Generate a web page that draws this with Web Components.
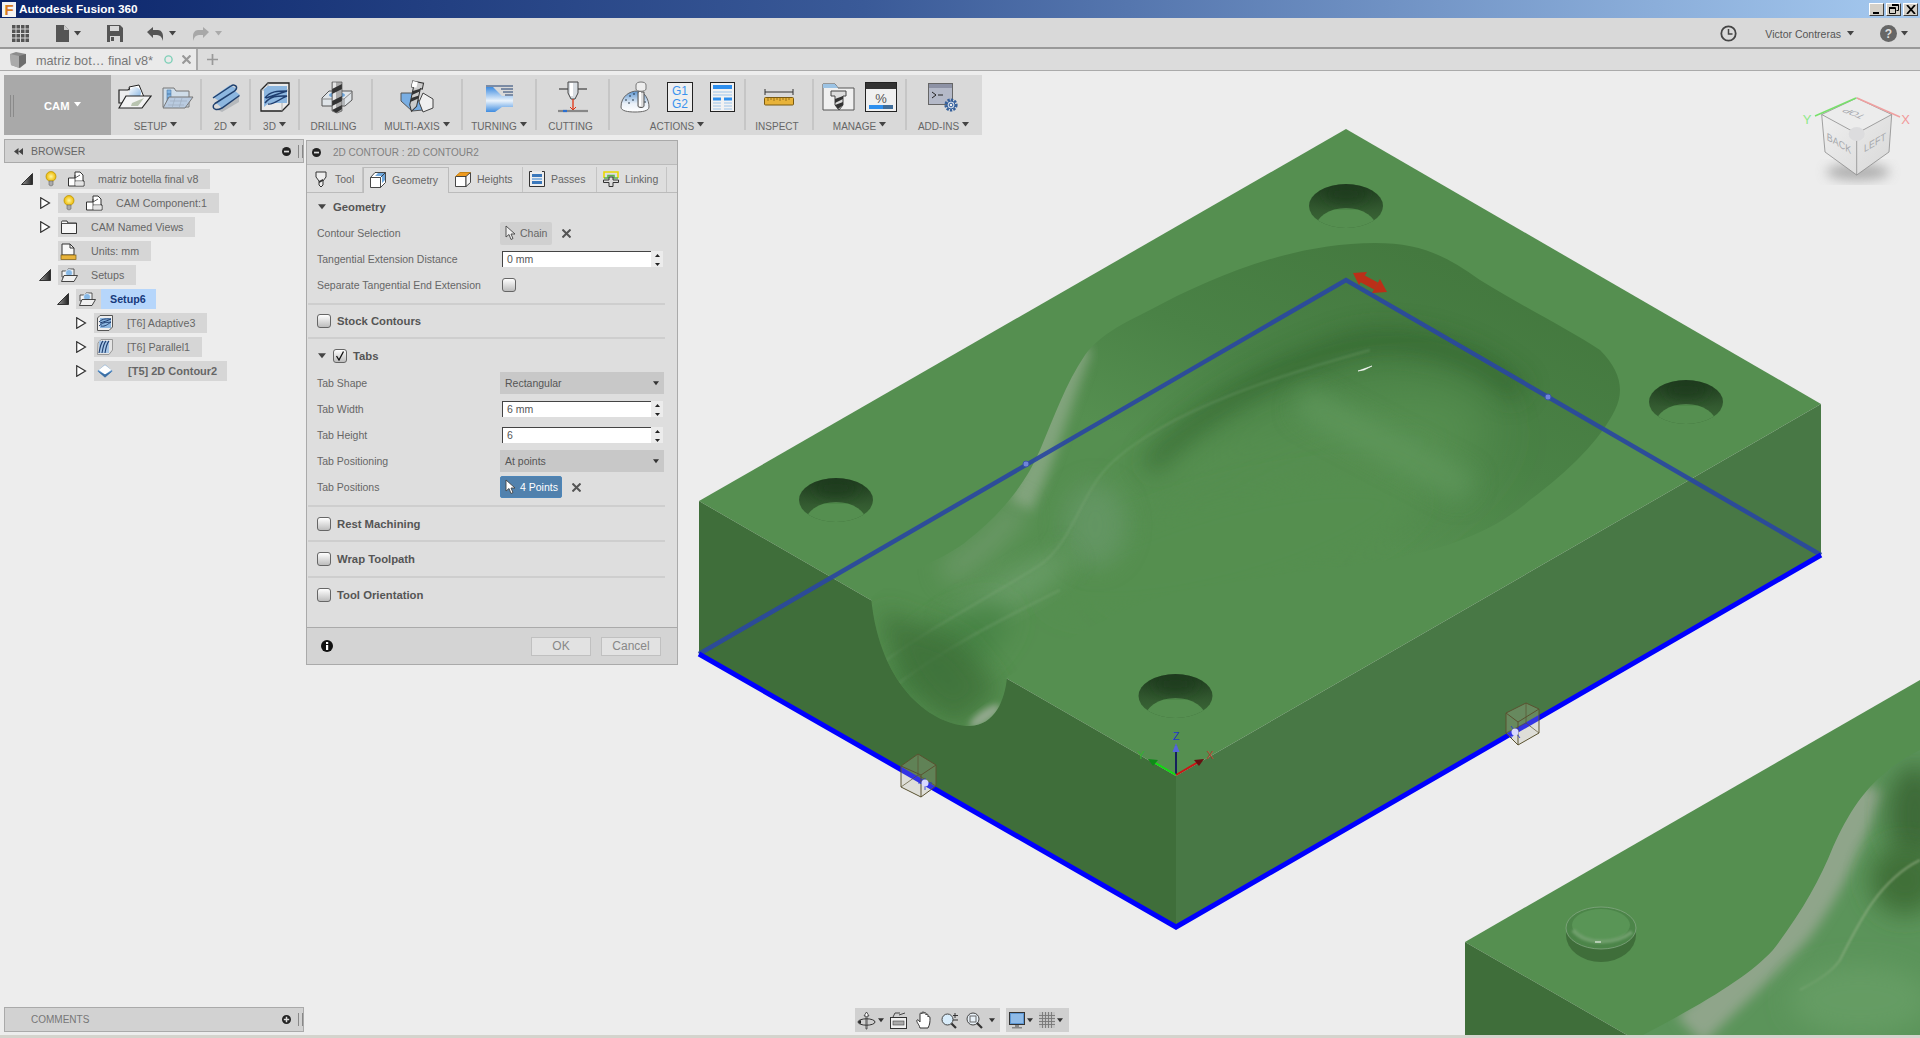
<!DOCTYPE html>
<html lang="en"><head><meta charset="utf-8"><title>Autodesk Fusion 360</title>
<style>
html,body{margin:0;height:100%;overflow:hidden;background:#ededed;font-family:"Liberation Sans",Arial,sans-serif}
fx-app{height:1038px}
</style></head><body>
<fx-app>
  <fx-title-bar></fx-title-bar>
  <fx-quick-bar></fx-quick-bar>
  <fx-doc-tabs></fx-doc-tabs>
  <fx-workspace>
    <fx-viewport slot="back"></fx-viewport>
    <fx-ribbon slot="ribbon">
      <fx-cam-button></fx-cam-button>
      <fx-rgroup w="91" label="SETUP" caret><fx-icon name="setup1"></fx-icon><fx-icon name="setup2"></fx-icon></fx-rgroup>
      <fx-rgroup w="49" label="2D" caret><fx-icon name="r2d"></fx-icon></fx-rgroup>
      <fx-rgroup w="49" label="3D" caret><fx-icon name="r3d"></fx-icon></fx-rgroup>
      <fx-rgroup w="73" label="DRILLING"><fx-icon name="drill"></fx-icon></fx-rgroup>
      <fx-rgroup w="90" label="MULTI-AXIS" caret><fx-icon name="multi"></fx-icon></fx-rgroup>
      <fx-rgroup w="74" label="TURNING" caret><fx-icon name="turn"></fx-icon></fx-rgroup>
      <fx-rgroup w="73" label="CUTTING"><fx-icon name="cut"></fx-icon></fx-rgroup>
      <fx-rgroup w="136" label="ACTIONS" caret gap="17"><fx-icon name="joy"></fx-icon><fx-icon name="g1g2"></fx-icon><fx-icon name="sheet"></fx-icon></fx-rgroup>
      <fx-rgroup w="68" label="INSPECT"><fx-icon name="ruler"></fx-icon></fx-rgroup>
      <fx-rgroup w="93" label="MANAGE" caret><fx-icon name="tlib"></fx-icon><fx-icon name="pct"></fx-icon></fx-rgroup>
      <fx-rgroup w="75" label="ADD-INS" caret last><fx-icon name="addin"></fx-icon></fx-rgroup>
    </fx-ribbon>

    <fx-browser slot="browser">
      <fx-tree-row level="0" exp="open" label="matriz botella final v8" bulb><fx-icon name="bulb"></fx-icon><fx-icon name="comp"></fx-icon></fx-tree-row>
      <fx-tree-row level="1" exp="closed" label="CAM Component:1" bulb><fx-icon name="bulb"></fx-icon><fx-icon name="comp"></fx-icon></fx-tree-row>
      <fx-tree-row level="1" exp="closed" label="CAM Named Views"><fx-icon name="folder"></fx-icon></fx-tree-row>
      <fx-tree-row level="1" label="Units: mm"><fx-icon name="units"></fx-icon></fx-tree-row>
      <fx-tree-row level="1" exp="open" label="Setups"><fx-icon name="setupS"></fx-icon></fx-tree-row>
      <fx-tree-row level="2" exp="open" label="Setup6" selected><fx-icon name="setupS"></fx-icon></fx-tree-row>
      <fx-tree-row level="3" exp="closed" label="[T6] Adaptive3"><fx-icon name="opAd"></fx-icon></fx-tree-row>
      <fx-tree-row level="3" exp="closed" label="[T6] Parallel1"><fx-icon name="opPa"></fx-icon></fx-tree-row>
      <fx-tree-row level="3" exp="closed" label="[T5] 2D Contour2" strong><fx-icon name="opCo"></fx-icon></fx-tree-row>
    </fx-browser>

    <fx-dialog slot="dialog" heading="2D CONTOUR : 2D CONTOUR2">
      <fx-tabs slot="tabs">
        <fx-tab w="56" label="Tool"><fx-icon name="tTool"></fx-icon></fx-tab>
        <fx-tab w="86" label="Geometry" active><fx-icon name="tGeo"></fx-icon></fx-tab>
        <fx-tab w="74" label="Heights"><fx-icon name="tHei"></fx-icon></fx-tab>
        <fx-tab w="74" label="Passes"><fx-icon name="tPas"></fx-icon></fx-tab>
        <fx-tab w="70" label="Linking"><fx-icon name="tLin"></fx-icon></fx-tab>
      </fx-tabs>
      <fx-section label="Geometry" tri h="26"></fx-section>
      <fx-field label="Contour Selection"><fx-picker text="Chain"></fx-picker></fx-field>
      <fx-field label="Tangential Extension Distance"><fx-input value="0 mm"></fx-input></fx-field>
      <fx-field label="Separate Tangential End Extension"><fx-check style="margin-left:2px"></fx-check></fx-field>
      <fx-rule gap="5"></fx-rule>
      <fx-section label="Stock Contours" box h="32"></fx-section>
      <fx-rule></fx-rule>
      <fx-section label="Tabs" tri box checked h="31" style="padding-top:3px"></fx-section>
      <fx-field label="Tab Shape"><fx-select text="Rectangular"></fx-select></fx-field>
      <fx-field label="Tab Width"><fx-input value="6 mm"></fx-input></fx-field>
      <fx-field label="Tab Height"><fx-input value="6"></fx-input></fx-field>
      <fx-field label="Tab Positioning"><fx-select text="At points"></fx-select></fx-field>
      <fx-field label="Tab Positions"><fx-picker text="4 Points" active></fx-picker></fx-field>
      <fx-rule gap="5"></fx-rule>
      <fx-section label="Rest Machining" box h="33"></fx-section>
      <fx-rule></fx-rule>
      <fx-section label="Wrap Toolpath" box h="34"></fx-section>
      <fx-rule></fx-rule>
      <fx-section label="Tool Orientation" box h="34"></fx-section>
    </fx-dialog>

    <fx-comments slot="comments"></fx-comments>
    <fx-nav-bar slot="nav"></fx-nav-bar>
  </fx-workspace>
</fx-app>

<script>
const TRI='<svg width="7" height="5" viewBox="0 0 7 5" style="display:block"><path d="M0 0H7L3.500 4.500Z" fill="currentColor"/></svg>';
const def=(n,c)=>customElements.define(n,c);
const SHADOW=(el,html)=>{el.attachShadow({mode:'open'}).innerHTML=html};

/* ------ icon library (each: [w,h,svg body]) ------ */
const I={
setup1:[34,24,`<defs><linearGradient id="a" x1="0" y1="0" x2="1" y2="1"><stop offset="0" stop-color="#fff"/><stop offset="1" stop-color="#7fb0e0"/></linearGradient></defs>
<path d="M1 5H10L12 3H21V18H1Z" fill="#eee" stroke="#222" stroke-width="1.200"/><path d="M11 2L21 0L26 12L15 14Z" fill="#fff" stroke="#222"/><circle cx="17" cy="8" r="6" fill="url(#a)"/>
<path d="M1 23L8 11H33L24 23Z" fill="#f4f4f4" stroke="#222" stroke-width="1.200"/><path d="M14 18L26 13L20 21H13Z" fill="#b9c4b0"/>`],
setup2:[32,24,`<path d="M1 3H12L14 6H27V22H1Z" fill="#cfdde9" stroke="#777"/><path d="M5 5h4v4h-4zM5 9h4v4h-4zM5 13h4v4h-4zM9 13h4v4h-4z" fill="#7fb2e0" stroke="#4f7cab" stroke-width=".6"/>
<path d="M1 23L7 12H31L23 23Z" fill="#b9cbe0" stroke="#777"/><path d="M8 16H25M6 20H22M13 13L10 23M20 13L17 23" stroke="#9aa9b9" stroke-width=".6" fill="none"/>`],
r2d:[31,29,`<path d="M8 27L29 12V19L12 29Z" fill="#b6b9bc"/><path d="M3 14L20 2L27 6L9 18Z" fill="#8db7e0"/><path d="M6 20L25 8L30 12L12 25Z" fill="#8db7e0"/>
<path d="M3 15L21 3C23 1.500 26 2 26.500 4C27 6 26 7 24 8.500L5 20.500C2 22.500 3 26 6 26.500C8 27 10 26 12 25L29.500 12.500" fill="none" stroke="#20406e" stroke-width="1.500"/>`],
r3d:[30,30,`<path d="M8 1H29V22L22 29H1V8Z" fill="#eaeaea" stroke="#222" stroke-width="1.300"/><path d="M8 1V8H1M22 29V8M8 8H29" stroke="#999" stroke-width=".7" fill="none"/><path d="M4 7L8 4H27V21H9L4 25Z" fill="#8db7e0"/>
<path d="M5 16C10 9 18 9 27 9C18 12 12 14 6 16M5 21C11 13 19 14 27 14C19 17 14 23 8 22" fill="none" stroke="#1f3e70" stroke-width="1.400"/>`],
drill:[34,32,`<path d="M3 17L10 10H33V19L26 25H3Z" fill="#dfe4e8" stroke="#555"/><path d="M3 18H25V25M25 18L33 11" stroke="#888" fill="none"/><ellipse cx="18" cy="14" rx="8" ry="3" fill="#6ea7dd"/>
<path d="M13 1H23V30L18 32L13 30Z" fill="#aaa"/><path d="M14 1H17V30L14 30Z" fill="#e4e4e4"/><path d="M13 8L23 3V8L13 13ZM13 20L23 15V20L13 25ZM13 29L23 24V28L17 32Z" fill="#333"/><path d="M13 1H23V30L18 32L13 30Z" fill="none" stroke="#555" stroke-width=".7"/>`],
multi:[34,34,`<path d="M1 13H15L23 30L12 31L1 21Z" fill="#79aee3" stroke="#555"/><path d="M23 13L33 19V28L23 32L19 22Z" fill="#f0f0f0" stroke="#444"/>
<g transform="rotate(12 17 10)"><path d="M11 2H22V8H20V26L16 32L13 26V8H11Z" fill="#ccc" stroke="#333"/><path d="M13 12L20 8V11L13 16ZM13 19L20 15V18L13 23Z" fill="#333"/><path d="M11 2H16V8H11Z" fill="#fff"/></g>`],
turn:[28,30,`<path d="M1 4H28M16 7H28M18 10H28M20 13H28" stroke="#1f3e70" stroke-width="1"/><defs><linearGradient id="t" x1="0" y1="0" x2="0" y2="1"><stop offset="0" stop-color="#3f8ce0"/><stop offset=".55" stop-color="#eaf3fc"/><stop offset="1" stop-color="#3f8ce0"/></linearGradient></defs>
<path d="M1 5H8L17 14H28V25H17L10 30H1Z" fill="url(#t)"/>`],
cut:[32,32,`<path d="M2 8H12M20 8H30" stroke="#222" stroke-width="1.100"/><path d="M11 1H21V12L18 18H14L11 12Z" fill="#d8dde2" stroke="#444"/><path d="M13 2H16V15H13Z" fill="#fff"/><path d="M16 18V28" stroke="#e03010" stroke-width="1.300"/><path d="M13 26L16 29L19 26" fill="none" stroke="#e03010"/>
<path d="M1 30H31" stroke="#888" stroke-width="2.200"/><path d="M6 30H10" stroke="#2a6fd0" stroke-width="2.200"/>`],
joy:[30,30,`<defs><linearGradient id="j" x1="0" y1="0" x2="0" y2="1"><stop offset="0" stop-color="#5a93cf"/><stop offset=".6" stop-color="#eaf1f8"/><stop offset="1" stop-color="#fff"/></linearGradient></defs>
<path d="M1 25C1 14 10 9 17 9C25 9 29 18 29 25C29 29 22 30 15 30C8 30 1 29 1 25Z" fill="url(#j)" stroke="#666"/><g fill="#123" ><circle cx="6" cy="18" r=".8"/><circle cx="10" cy="14" r=".8"/><circle cx="14" cy="12" r=".8"/><circle cx="9" cy="21" r=".8"/><circle cx="13" cy="18" r=".8"/><circle cx="25" cy="20" r=".8"/></g>
<path d="M18 10H24V24C24 26 18 26 18 24Z" fill="#ddd" stroke="#555"/><path d="M19 10H21V24H19Z" fill="#fff"/><path d="M16 3C16 1 18 0 21 0C24 0 26 1 26 3V7C26 10 16 10 16 7Z" fill="#eee" stroke="#777"/>`],
g1g2:[26,30,`<rect x=".5" y=".5" width="25" height="29" fill="#efefef" stroke="#222"/><text x="13" y="13" font-size="12" text-anchor="middle" fill="#3b93ee">G1</text><text x="13" y="26" font-size="12" text-anchor="middle" fill="#3b93ee">G2</text>`],
sheet:[25,30,`<rect x=".5" y=".5" width="24" height="29" fill="#f2f2f2" stroke="#222"/><rect x="3" y="3" width="19" height="4" fill="#2e8fee"/><path d="M3 10H22M3 13H22" stroke="#9cc4ea"/><path d="M3 15.500h8v3h-8zM14 15.500h8v3h-8z" fill="#2e8fee"/><path d="M3 21H11M14 21H22M3 24H11M14 24H22M3 27H11M14 27H22" stroke="#9cc4ea"/>`],
ruler:[30,18,`<path d="M1 1V7M29 1V7M1 4H29" stroke="#333" fill="none"/><rect x=".5" y="9.500" width="29" height="7.500" rx="1" fill="#e8b33a" stroke="#7a5a10"/><path d="M4 10V13M7 10V12M10 10V13M13 10V12M16 10V13M19 10V12M22 10V13M25 10V12" stroke="#7a5a10" stroke-width=".7"/>`],
tlib:[33,28,`<path d="M1 1H13L16 5H32V27H1Z" fill="#f0f0f0" stroke="#555"/><path d="M1 1H13L16 5H1Z" fill="#9cc3e4"/><path d="M9 8H24V13H21V22L17 27L13 22V13H9Z" fill="#ddd" stroke="#444"/><path d="M13 16L21 13V16L13 20ZM13 22L21 19V22L16 26Z" fill="#333"/>`],
pct:[32,30,`<rect x=".5" y=".5" width="31" height="29" fill="#f0f0f0" stroke="#222"/><rect x="1" y="1" width="30" height="6" fill="#333"/><text x="16" y="21" font-size="13" text-anchor="middle" fill="#555">%</text><rect x="4" y="23" width="14" height="4" fill="#2e8fee"/><rect x="18" y="23" width="10" height="4" fill="#3f6d9a"/>`],
addin:[31,29,`<rect x=".5" y=".5" width="24" height="21" fill="#b4b9c8" stroke="#666"/><rect x="1" y="1" width="23" height="4" fill="#8d92a5"/><path d="M4 9L8 12L4 15M10 12H15" stroke="#222" fill="none"/>
<g transform="translate(23 22)"><circle r="5.200" fill="none" stroke="#35609c" stroke-width="2.800" stroke-dasharray="2.200 1.200"/><circle r="4" fill="#cdd8e8" stroke="#35609c"/><circle r="1.800" fill="#f0f0f0" stroke="#35609c"/></g>`],
bulb:[12,16,`<defs><radialGradient id="b"><stop offset="0" stop-color="#fff7a0"/><stop offset="1" stop-color="#eeb800"/></radialGradient></defs><circle cx="6" cy="5.500" r="5" fill="url(#b)" stroke="#b59000" stroke-width=".7"/><path d="M4 10H8V14L6 15L4 14Z" fill="#aaa" stroke="#666" stroke-width=".6"/>`],
comp:[17,16,`<path d="M.5 7H7V1H12L15 4V10H16V15H.5Z" fill="#fff" stroke="#333"/><path d="M7 4V15M7 10H16M7 7L12 4" stroke="#333" fill="none" stroke-width=".8"/><path d="M7.500 10.500h8v4h-8z" fill="#e4e4e4"/>`],
folder:[16,14,`<path d="M.5 2.500C.5 1 1 1 2 1H6L7 3H15.500V13.500H.5Z" fill="#f6f6f6" stroke="#333"/><path d="M.5 3.500H15" stroke="#555"/>`],
units:[16,17,`<path d="M1 1H9L13 5V12H1Z" fill="#f8f8f8" stroke="#333"/><path d="M9 1V5H13" fill="none" stroke="#333"/><rect x="0" y="12" width="15" height="4.500" fill="#e8b33a" stroke="#7a5a10" stroke-width=".7"/>`],
setupS:[17,14,`<path d="M1 3H6L7 1H13V9H1Z" fill="#f4f4f4" stroke="#333" stroke-width=".8"/><circle cx="8" cy="5" r="3.500" fill="#86b8e6" stroke="#fff" stroke-width=".6"/><path d="M.5 13.500L3 7.500H16.500L13 13.500Z" fill="#f0f0f0" stroke="#333" stroke-width=".9"/>`],
opAd:[16,16,`<path d="M3 .5H15.500V12L12 15.500H.5V3Z" fill="#eee" stroke="#555"/><rect x="3" y="3" width="11" height="10" fill="#8db7e0"/><path d="M2 7C6 3 10 4 14 4C10 6 6 7 3 8M2 11C7 6 10 8 14 7C11 9 8 12 4 11" fill="none" stroke="#1f3e70"/>`],
opPa:[16,16,`<path d="M4 .5H15.500V11L12 15.500H.5L1 4Z" fill="#e5e5e5" stroke="#999"/><rect x="2" y="2" width="10" height="12" fill="#a7c6e6"/><path d="M2 14C3 8 4 4 6 2M5 14C6 8 7 4 9 2M8 14C9 8 10 4 12 2" fill="none" stroke="#1f3e70" stroke-width="1.100"/>`],
opCo:[16,14,`<path d="M.5 7L8 .5L15.500 7L8 13.500Z" fill="#5a94cc"/><path d="M1.500 6L8 1L14.500 6L8 10.500Z" fill="#fff"/><path d="M.5 7L8 13.500L15.500 7L8 10.500Z" fill="#3c6ea3"/>`],
tTool:[12,17,`<path d="M1 1H11V6L8 10V14L6 16L4 14V10L1 6Z" fill="#eee" stroke="#333"/><path d="M4 10L8 8V10L4 12Z" fill="#333"/>`],
tGeo:[16,16,`<path d="M.5 5.500L5 .5H15.500V10.500L10.500 15.500H.5Z" fill="#fff" stroke="#333" stroke-width=".9"/><path d="M5 4L8 1H15V8L12 11V4Z" fill="#6da6dc"/><path d="M.5 5.500H10.500V15.500M10.500 5.500L15.500 .5" fill="none" stroke="#333" stroke-width=".9"/>`],
tHei:[16,16,`<path d="M.5 5.500L5 1.500H15.500L11 5.500Z" fill="#ee9a20"/><path d="M.5 5.500H11V15.500H.5Z" fill="#fff" stroke="#333" stroke-width=".9"/><path d="M11 5.500L15.500 1.500V11.500L11 15.500Z" fill="#f5f5f5" stroke="#333" stroke-width=".9"/><path d="M.5 5.500L5 1.500H15.500" fill="none" stroke="#c78314"/>`],
tPas:[16,16,`<path d="M.5 .5V15.500H15.500V.5" fill="#eee" stroke="#333"/><rect x="3" y="3" width="10" height="3" fill="#3b78bb"/><rect x="3" y="7" width="10" height="2" fill="#8eb7e0"/><rect x="3" y="10" width="10" height="3" fill="#3b78bb"/><path d="M.5 .5H3M13 .5H15.500" stroke="#333"/>`],
tLin:[16,16,`<path d="M1 7V1H15V7" fill="none" stroke="#e8d800" stroke-width="1.600"/><path d="M1 7H5V4.500H11V7H15" stroke="#5ab44a" stroke-width="1.600" fill="none"/><path d="M.5 9H6V6H10V9H15.500V11.500H10V15.500H6V11.500H.5Z" fill="#ddd" stroke="#333"/>`],
cursor:[11,16,`<path d="M1 1V12L4 9.500L6 14.500L8 13.500L6 9H10Z" fill="currentColor" stroke="#444" stroke-width=".9"/>`]
};
let iconSeq=0;
def('fx-icon',class extends HTMLElement{connectedCallback(){
  if(this.shadowRoot)return;
  const d=I[this.getAttribute('name')];
  const uid='i'+(++iconSeq);
  const body=d[2].replace(/id="(\w+)"/g,`id="${uid}$1"`).replace(/url\(#(\w+)\)/g,`url(#${uid}$1)`);
  SHADOW(this,`<style>:host{display:inline-block;line-height:0;flex:none;font-family:"Liberation Sans",sans-serif}svg{display:block;overflow:visible}</style>
  <svg width="${d[0]}" height="${d[1]}" viewBox="0 0 ${d[0]} ${d[1]}">${body}</svg>`);
}});

def('fx-app',class extends HTMLElement{constructor(){super();SHADOW(this,`<style>:host{display:flex;flex-direction:column;width:1920px;height:1038px;overflow:hidden;border-bottom:3px solid #d4d4cd;box-sizing:border-box}</style><slot></slot>`)}});

def('fx-title-bar',class extends HTMLElement{constructor(){super();SHADOW(this,`<style>
:host{display:flex;align-items:center;height:18px;flex:none;background:linear-gradient(90deg,#0a246a,#3a5a98 45%,#a6caf0);color:#fff;font:bold 11.800px "Liberation Sans",sans-serif;position:relative;z-index:2}
.logo{width:14px;height:15px;margin:0 3px 0 2px;background:#f4f4f4;color:#d97b20;font:bold 15px/15px "Liberation Sans",sans-serif;text-align:center}
.sp{flex:1}.w{display:flex;gap:2px;margin-right:2px}
.b{width:15px;height:13px;box-sizing:border-box;background:#d4d0c8;border:1px solid;border-color:#fff #404040 #404040 #fff;display:flex;align-items:center;justify-content:center}
</style><div class="logo">F</div><span>Autodesk Fusion 360</span><div class="sp"></div>
<div class="w"><div class="b"><svg width="9" height="9"><path d="M1 7H7V9H1Z" fill="#000"/></svg></div>
<div class="b"><svg width="10" height="10"><path d="M3.500 .5H9.500V6.500H7.500M.5 3.500H6.500V9.500H.5Z" fill="none" stroke="#000"/><path d="M3 1H9M0 4H6" stroke="#000" stroke-width="2"/></svg></div>
<div class="b"><svg width="10" height="9"><path d="M1 0L9 9M9 0L1 9" stroke="#000" stroke-width="1.800"/></svg></div></div>`)}});

def('fx-quick-bar',class extends HTMLElement{constructor(){super();
const grid=[0,4.500,9,13.500].flatMap(x=>[0,4.500,9,13.500].map(y=>`<rect x="${x}" y="${y}" width="3.500" height="3.500"/>`)).join('');
SHADOW(this,`<style>
:host{display:flex;align-items:center;flex:none;background:#d9d9d9;border-bottom:2px solid #999;color:#555;font:10.500px "Liberation Sans",sans-serif;padding:2px 0 0 12px;box-sizing:content-box;height:27px;position:relative;z-index:2}
svg{display:block;flex:none}.c{margin-left:4px;color:#444}.sp{flex:1}.g{color:#aaa}
</style>
<svg width="17" height="17" fill="#555">${grid}</svg>
<svg style="margin-left:27px" width="13" height="17"><path d="M0 0H8L13 5V17H0Z" fill="#555"/><path d="M8 0V5H13" fill="#ccc"/></svg><span class="c" style="margin-left:5px">${TRI}</span>
<svg style="margin-left:26px" width="16" height="17"><path d="M0 0H13L16 3V17H0Z" fill="#555"/><rect x="3" y="1" width="9" height="5" fill="#d9d9d9"/><rect x="3" y="11" width="10" height="6" fill="#d9d9d9"/><rect x="4" y="12" width="3" height="4" fill="#555"/></svg>
<svg style="margin-left:24px" width="16" height="14"><path d="M0 5L6 0V3H11C14 3 16 6 16 9V14C15 10 13 8 10 8H6V11Z" fill="#555"/></svg><span class="c" style="margin-left:6px">${TRI}</span>
<svg style="margin-left:17px" width="16" height="14"><path d="M16 5L10 0V3H5C2 3 0 6 0 9V14C1 10 3 8 6 8H10V11Z" fill="#a8a8a8"/></svg><span class="c g" style="margin-left:6px">${TRI}</span>
<div class="sp"></div>
<svg width="17" height="17"><circle cx="8.500" cy="8.500" r="7.200" fill="none" stroke="#444" stroke-width="1.800"/><path d="M8.500 4V9H12.500" fill="none" stroke="#444" stroke-width="1.500"/></svg>
<span style="margin-left:28px">Victor Contreras</span><span class="c" style="margin-left:6px">${TRI}</span>
<svg style="margin-left:26px" width="17" height="17"><circle cx="8.500" cy="8.500" r="8.500" fill="#666"/><text x="8.500" y="13" text-anchor="middle" font-size="12" font-weight="bold" fill="#ddd" font-family="Liberation Sans">?</text></svg><span class="c" style="margin-left:4px;margin-right:12px">${TRI}</span>`)}});

def('fx-doc-tabs',class extends HTMLElement{constructor(){super();SHADOW(this,`<style>
:host{display:flex;align-items:center;height:21px;flex:none;background:#dcdcdc;border-bottom:1px solid #aaa;font:12.700px "Liberation Sans",sans-serif;color:#777;position:relative;z-index:2}
.tab{display:flex;align-items:center;width:198px;height:100%;box-sizing:border-box;background:#eaeaea;border-right:2px solid #aaa;padding-left:10px}
.t{margin-left:10px;white-space:nowrap;padding-top:2px}
</style><div class="tab"><svg width="16" height="16"><path d="M0 2L6 0L16 2V11L10 16L1 13Z" fill="#8c8c8c"/><path d="M0 2L9 4V16L1 13Z" fill="#aaa"/><path d="M9 4L16 2V11L9 16Z" fill="#6e6e6e"/></svg>
<span class="t">matriz bot… final v8*</span>
<svg style="margin-left:11px;flex:none" width="9" height="9"><circle cx="4.500" cy="4.500" r="3.600" fill="none" stroke="#7fd0b8" stroke-width="1.400"/></svg>
<svg style="margin-left:9px;flex:none" width="9" height="9"><path d="M.5 .5L8.500 8.500M8.500 .5L.5 8.500" stroke="#999" stroke-width="2.200"/></svg></div>
<svg style="margin-left:9px" width="11" height="11"><path d="M5.500 0V11M0 5.500H11" stroke="#999" stroke-width="1.700"/></svg>`)}});

def('fx-workspace',class extends HTMLElement{constructor(){super();SHADOW(this,`<style>
:host{display:grid;position:relative;flex:1;min-height:0;background:#ededed;grid-template-columns:auto 1fr;grid-template-rows:auto 1fr auto}
::slotted([slot=ribbon]){grid-column:1/3;margin:4px 0 0 4px;position:relative}
.main{grid-column:1/3;display:flex;align-items:flex-start;margin-top:4px;padding-left:4px;min-height:0;position:relative}
.foot{grid-column:1/3;display:grid;grid-template-columns:1fr auto 1fr;align-items:start;padding:0 0 3px 4px;position:relative}
</style><slot name="back"></slot><slot name="ribbon"></slot>
<div class="main"><slot name="browser"></slot><slot name="dialog"></slot></div>
<div class="foot"><slot name="comments"></slot><slot name="nav"></slot></div>`)}});

def('fx-ribbon',class extends HTMLElement{constructor(){super();SHADOW(this,`<style>:host{display:flex;width:fit-content;height:60px;background:#d9d9d9}</style><slot></slot>`)}});
def('fx-cam-button',class extends HTMLElement{constructor(){super();SHADOW(this,`<style>
:host{display:flex;align-items:center;width:107px;box-sizing:border-box;background:#a9a9a9;color:#fff;font:bold 11.200px "Liberation Sans",sans-serif;padding:2px 0 0 6px}
.g{width:4px;height:22px;border:solid #8a8a8a;border-width:0 1px;box-sizing:border-box;margin-right:30px}
.c{margin-left:5px;margin-top:-3px}</style><div class="g"></div><span>CAM</span><span class="c">${TRI}</span>`)}});
def('fx-rgroup',class extends HTMLElement{constructor(){super();
const hasCaret=this.hasAttribute('caret');
const caret=hasCaret?`<span class="c">${TRI}</span>`:'';
SHADOW(this,`<style>
:host{display:flex;flex-direction:column;position:relative;box-sizing:border-box;color:#666;font:10px "Liberation Sans",sans-serif;align-items:center}
:host(:not([last]))::after{content:"";position:absolute;right:0;top:4px;bottom:5px;width:2px;background:#c6c6c6}
.i{flex:1;display:flex;align-items:center;justify-content:center;gap:${this.getAttribute('gap')||10}px;padding-top:2px;padding-right:2px}
.l{display:flex;align-items:center;height:18px;padding-right:${hasCaret?2:6}px;white-space:nowrap}.c{margin-left:3px;color:#444;margin-top:-3px}
</style><div class="i"><slot></slot></div><div class="l">${this.getAttribute('label')}${caret}</div>`);
this.style.width=this.getAttribute('w')+'px';}});

def('fx-browser',class extends HTMLElement{constructor(){super();SHADOW(this,`<style>
:host{display:block;width:300px;flex:none;color:#666;font:10.500px "Liberation Sans",sans-serif}
.h{display:flex;align-items:center;height:24px;box-sizing:border-box;background:#d2d2d2;border:1px solid #aaa;padding-left:9px;margin-bottom:6px;color:#666}
.h span{margin-left:8px;flex:1}.g{width:3px;height:13px;border:solid #888;border-width:0 1px;margin:0 0 0 7px}
</style><div class="h"><svg width="9" height="7"><path d="M4.500 0V7L0 3.500ZM9 0V7L4.500 3.500Z" fill="#444"/></svg><span>BROWSER</span>
<svg width="9" height="9"><circle cx="4.500" cy="4.500" r="4.500" fill="#222"/><rect x="2" y="3.700" width="5" height="1.700" fill="#ddd"/></svg><div class="g"></div></div><slot></slot>`)}});

def('fx-tree-row',class extends HTMLElement{constructor(){super();
const lv=+this.getAttribute('level'),exp=this.getAttribute('exp');
const e=exp==='open'?`<svg width="12" height="12"><defs><linearGradient id="g" x1="0" x2="1"><stop offset="0" stop-color="#999"/><stop offset="1" stop-color="#222"/></linearGradient></defs><path d="M.5 11.500L11.500 .5V11.500Z" fill="url(#g)" stroke="#333"/></svg>`
 :exp==='closed'?`<svg width="11" height="12" style="margin-left:1px"><path d="M.7 .7L9.500 6L.7 11.300Z" fill="#fff" stroke="#333" stroke-width="1.200"/></svg>`:'';
const bulb=this.hasAttribute('bulb');
SHADOW(this,`<style>
:host{display:flex;align-items:center;height:20px;margin-bottom:4px;padding-left:${17+18*lv}px;color:#666;font:10.700px "Liberation Sans",sans-serif;white-space:nowrap}
.e{width:19px;flex:none;display:flex;align-items:center}
.b{display:flex;align-items:center;height:20px;background:#d6d6d6}
.ic{display:flex;align-items:center;justify-content:space-between;box-sizing:border-box;width:${bulb?50:25}px;padding:0 ${bulb?5:4}px 0 ${bulb?5:3}px}
.l{padding:0 12px 0 8px;height:20px;line-height:20px}
:host([selected]) .l{background:#b6d6fb;color:#16397c;font-weight:bold;padding:0 10px 0 9px}
:host([strong]) .l{font-weight:bold;font-size:11px;padding:0 10px 0 9px}
</style><div class="e">${e}</div><div class="b"><div class="ic"><slot></slot></div><div class="l">${this.getAttribute('label')}</div></div>`)}});

def('fx-dialog',class extends HTMLElement{constructor(){super();SHADOW(this,`<style>
:host{display:flex;flex-direction:column;width:372px;height:525px;margin:1px 0 0 2px;box-sizing:border-box;background:#dedede;border:1px solid #aaa;color:#666;font:10.500px "Liberation Sans",sans-serif;flex:none}
.h{display:flex;align-items:center;height:23px;flex:none;background:#d2d2d2;border-bottom:1px solid #bbb;padding-left:5px;color:#808080;font-size:10px}
.h span{margin-left:12px}
.body{flex:1;min-height:0;display:flex;flex-direction:column;padding-top:1px}
.f{display:flex;align-items:center;height:37px;flex:none;box-sizing:border-box;background:#d4d4d4;border-top:1px solid #aaa;padding-left:14px}
.btn{width:60px;height:19px;box-sizing:border-box;background:#e2e2e2;border:1px solid #c0c0c0;display:flex;align-items:center;justify-content:center;font-size:12px;color:#888}
</style><div class="h"><svg width="9" height="9"><circle cx="4.500" cy="4.500" r="4.500" fill="#222"/><rect x="2" y="3.700" width="5" height="1.700" fill="#ddd"/></svg><span>${this.getAttribute('heading')}</span></div>
<slot name="tabs"></slot><div class="body"><slot></slot></div>
<div class="f"><svg width="12" height="12"><circle cx="6" cy="6" r="6" fill="#111"/><rect x="5" y="5" width="2.200" height="5" fill="#fff"/><rect x="5" y="2" width="2.200" height="2" fill="#fff"/></svg>
<div class="btn" style="margin-left:198px">OK</div><div class="btn" style="margin-left:10px">Cancel</div></div>`)}});
def('fx-tabs',class extends HTMLElement{constructor(){super();SHADOW(this,`<style>:host{display:flex;height:28px;flex:none;padding-top:2px;box-sizing:border-box;border-bottom:1px solid #bbb}</style><slot></slot>`)}});
def('fx-tab',class extends HTMLElement{constructor(){super();SHADOW(this,`<style>
:host{display:flex;align-items:center;box-sizing:border-box;height:25px;padding:0 0 1px 6px;gap:6px;border-right:1px solid #c4c4c4;color:#666;font:10.500px "Liberation Sans",sans-serif}
:host([active]){height:26px;background:#dedede;border:1px solid #bbb;border-bottom:none;padding:0 0 2px 6px;position:relative}
.s{width:16px;display:flex;justify-content:center}
</style><div class="s"><slot></slot></div><span>${this.getAttribute('label')}</span>`);this.style.width=this.getAttribute('w')+'px';}});

def('fx-check',class extends HTMLElement{constructor(){super();SHADOW(this,`<style>
:host{display:block;width:14px;height:14px;box-sizing:border-box;flex:none;border:1px solid #666;border-radius:3px;background:linear-gradient(#fff,#bdbdbd)}
svg{display:block;margin:1px}</style>${this.hasAttribute('checked')?'<svg width="10" height="10"><path d="M1.500 5L4 9L8.500 .5" fill="none" stroke="#111" stroke-width="1.300"/></svg>':''}`)}});

def('fx-section',class extends HTMLElement{constructor(){super();
const tri=this.hasAttribute('tri'),box=this.hasAttribute('box');
SHADOW(this,`<style>
:host{display:flex;align-items:center;flex:none;height:${this.getAttribute('h')}px;box-sizing:border-box;padding-left:${tri?11:10}px;font:bold 11.300px "Liberation Sans",sans-serif;color:#555}
.t{color:#444;margin-right:7px}.b{margin-right:6px}
</style>${tri?`<span class="t">${TRI.replace('width="7" height="5"','width="8" height="6"')}</span>`:''}${box?`<fx-check class="b" ${this.hasAttribute('checked')?'checked':''}></fx-check>`:''}<span>${this.getAttribute('label')}</span>`);}});

def('fx-field',class extends HTMLElement{constructor(){super();SHADOW(this,`<style>
:host{display:flex;align-items:center;flex:none;height:26px;padding-left:10px;color:#666;font:10.500px "Liberation Sans",sans-serif;white-space:nowrap}
.l{width:183px;flex:none}.c{display:flex;align-items:center}
</style><div class="l">${this.getAttribute('label')}</div><div class="c"><slot></slot></div>`)}});
def('fx-rule',class extends HTMLElement{constructor(){super();SHADOW(this,`<style>:host{display:block;height:2px;flex:none;background:#cecece;margin:${this.getAttribute('gap')||0}px 12px 0 1px}</style>`)}});

def('fx-input',class extends HTMLElement{constructor(){super();SHADOW(this,`<style>
:host{display:flex;height:16px;margin-left:2px;font:10.500px "Liberation Sans",sans-serif;color:#555}
.i{width:149px;box-sizing:border-box;background:#fff;border-top:1px solid #444;border-left:1px solid #444;padding-left:4px;line-height:14px}
.s{width:12px;display:flex;flex-direction:column;align-items:center;justify-content:space-between;background:#ececec;color:#222;padding:3px 0 1px;box-sizing:border-box}
.s svg{display:block;width:5px;height:3px}
</style><div class="i">${this.getAttribute('value')}</div><div class="s"><svg viewBox="0 0 5 3"><path d="M0 3H5L2.500 0Z" fill="currentColor"/></svg><svg viewBox="0 0 5 3"><path d="M0 0H5L2.500 3Z" fill="currentColor"/></svg></div>`)}});
def('fx-select',class extends HTMLElement{constructor(){super();SHADOW(this,`<style>
:host{display:flex;align-items:center;justify-content:space-between;width:164px;height:22px;box-sizing:border-box;background:#c8c8c8;padding:0 5px;color:#555;font:10.500px "Liberation Sans",sans-serif}
</style><span>${this.getAttribute('text')}</span><span style="color:#333">${TRI.replace('width="7"','width="6"')}</span>`)}});
def('fx-picker',class extends HTMLElement{constructor(){super();SHADOW(this,`<style>
:host{display:flex;align-items:center;gap:0;color:#666;font:10.500px "Liberation Sans",sans-serif}
.p{display:flex;align-items:center;height:23px;box-sizing:border-box;padding:0 5px 0 5px;background:#d0d0d0;gap:4px;border-radius:2px;color:#eee}
.p span{color:#666}
:host([active]) .p{background:#5181ad;border:1px solid #4c85b8;color:#fff;padding:0 3px 0 4px;height:22px}
:host([active]) .p span{color:#fff}
.x{margin-left:10px}
</style><div class="p"><fx-icon name="cursor"></fx-icon><span>${this.getAttribute('text')}</span></div>
<svg class="x" width="9" height="9"><path d="M.5 .5L8.500 8.500M8.500 .5L.5 8.500" stroke="#555" stroke-width="2"/></svg>`)}});

def('fx-comments',class extends HTMLElement{constructor(){super();SHADOW(this,`<style>
:host{display:flex;align-items:center;width:300px;height:25px;box-sizing:border-box;background:#d2d2d2;border:1px solid #aaa;padding-left:26px;color:#777;font:10px "Liberation Sans",sans-serif}
span{flex:1}.g{width:3px;height:13px;border:solid #888;border-width:0 1px;margin:0 0 0 7px}
</style><span>COMMENTS</span><svg width="9" height="9"><circle cx="4.500" cy="4.500" r="4.500" fill="#222"/><path d="M4.500 1.800V7.200M1.800 4.500H7.200" stroke="#ddd" stroke-width="1.500"/></svg><div class="g"></div>`)}});

def('fx-nav-bar',class extends HTMLElement{constructor(){super();
const tr=TRI.replace('width="7"','width="6"');
SHADOW(this,`<style>
:host{display:flex;gap:6px;margin-top:1px}
.g{display:flex;align-items:center;height:24px;background:#d0d0d0;color:#333;box-sizing:border-box}
svg{display:block;flex:none}.c{margin:0 0 0 2px}
</style><div class="g" style="width:145px;padding-left:2px">
<svg width="19" height="19" viewBox="0 0 19 19"><path d="M9.500 1L7 5H9V18H10V5H12Z" fill="#fff" stroke="#333" stroke-width=".8"/><ellipse cx="9.500" cy="11" rx="8.500" ry="3.200" fill="none" stroke="#333"/><path d="M1 11L4 9V13Z" fill="#222"/></svg><span class="c">${tr}</span>
<svg width="17" height="17" viewBox="0 0 17 17" style="margin-left:5.500px"><rect x=".5" y="5.500" width="16" height="11" fill="#f0f0f0" stroke="#333"/><rect x="3" y="9" width="11" height="4" fill="#aaa" stroke="#444" stroke-width=".6"/><path d="M3 5L5 1H10M9 3L15 1" stroke="#444" fill="none"/></svg>
<svg width="17" height="18" viewBox="0 0 17 18" style="margin-left:9px"><path d="M4 17C3 13 0 11 1 9C2 8 3 10 4 11V3C4 1.500 6 1.500 6 3V2C6 .5 8 .5 8 2V2.500C8 1 10 1 10 3V4C10 2.500 12 3 12 4V6C12.500 5 14 5 14 7C14 11 14 13 12 17Z" fill="#fff" stroke="#333"/></svg>
<svg width="18" height="17" viewBox="0 0 18 17" style="margin-left:8.500px"><circle cx="6.500" cy="7.500" r="5.500" fill="#d8ecfa" stroke="#444"/><path d="M10.500 11.500L15 16" stroke="#333" stroke-width="2.200"/><path d="M14 1V6M12 3.500H17M12 8H17" stroke="#333" fill="none"/></svg>
<svg width="17" height="17" viewBox="0 0 17 17" style="margin-left:6.500px"><circle cx="7" cy="7" r="6" fill="#e8f1f8" stroke="#444"/><rect x="4" y="4" width="6" height="6" fill="none" stroke="#666"/><path d="M11 11L16 16" stroke="#333" stroke-width="2.200"/></svg><span style="margin-left:6.500px">${tr}</span></div>
<div class="g" style="width:63px;padding-left:3px">
<svg width="16" height="17" viewBox="0 0 16 17"><rect x=".5" y=".5" width="15" height="12" fill="#5d96d2" stroke="#333"/><rect x="2" y="2" width="12" height="9" fill="#8fbbe8"/><path d="M6 13H10V15H13V16.500H3V15H6Z" fill="#888"/></svg><span class="c">${tr}</span>
<svg width="16" height="16" viewBox="0 0 16 16" style="margin-left:6px"><rect width="16" height="16" fill="#c4c4c4"/><path d="M3.500 0V16M6.500 0V16M9.500 0V16M12.500 0V16M0 3.500H16M0 6.500H16M0 9.500H16M0 12.500H16" stroke="#777" stroke-width=".9"/></svg><span class="c">${tr}</span></div>`)}});

/* ------ free canvas: 3-D model viewport ------ */
const hole=(cx,cy,id)=>`<clipPath id="h${id}"><ellipse cx="${cx}" cy="${cy}" rx="37" ry="22"/></clipPath>
<ellipse cx="${cx}" cy="${cy}" rx="37" ry="22" fill="url(#holeG)"/>
<g clip-path="url(#h${id})"><ellipse cx="${cx}" cy="${cy+23}" rx="31" ry="21" fill="#558f50"/><ellipse cx="${cx}" cy="${cy-12}" rx="22" ry="10" fill="#1f3a1e" filter="url(#b6)" opacity=".7"/></g>`;
const pocket="M871 597C905 570 945 560 968 540C1000 515 1025 485 1040 450C1055 415 1065 385 1085 355C1100 335 1120 325 1150 310C1210 278 1290 243 1375 243C1420 243 1445 255 1480 280C1520 305 1570 330 1600 350C1620 370 1625 390 1615 410C1600 440 1570 470 1530 500C1490 535 1440 550 1380 562C1310 572 1240 580 1180 592C1130 605 1090 625 1007 677C1005 700 995 725 970 726C935 726 880 690 871 597Z";
def('fx-viewport',class extends HTMLElement{constructor(){super();SHADOW(this,`<style>
:host{position:absolute;inset:0;display:block;font-family:"Liberation Sans",sans-serif}
svg{position:absolute;left:0;top:0;display:block}
</style>
<svg width="1920" height="964" viewBox="0 71 1920 964">
<defs>
<linearGradient id="holeG" x1="0" y1="0" x2="0" y2="1"><stop offset="0" stop-color="#1e3a1e"/><stop offset=".6" stop-color="#335a30"/><stop offset="1" stop-color="#3c6b38"/></linearGradient>
<linearGradient id="pkBase" gradientUnits="userSpaceOnUse" x1="1420" y1="250" x2="1280" y2="580"><stop offset="0" stop-color="#44793f"/><stop offset=".45" stop-color="#4a8246"/><stop offset=".8" stop-color="#558f50"/></linearGradient>
<linearGradient id="cubeL" x1="0" y1="0" x2="1" y2="1"><stop offset="0" stop-color="#f2f2f2"/><stop offset="1" stop-color="#d8d8d8"/></linearGradient>
<filter id="b3" x="-30%" y="-30%" width="160%" height="160%"><feGaussianBlur stdDeviation="3"/></filter>
<filter id="b6" x="-30%" y="-30%" width="160%" height="160%"><feGaussianBlur stdDeviation="6"/></filter>
<filter id="b12" x="-40%" y="-40%" width="180%" height="180%"><feGaussianBlur stdDeviation="12"/></filter>
<filter id="b25" x="-50%" y="-50%" width="200%" height="200%"><feGaussianBlur stdDeviation="25"/></filter>
<filter id="b1" x="-30%" y="-30%" width="160%" height="160%"><feGaussianBlur stdDeviation="1"/></filter>
<clipPath id="pk"><path d="${pocket}"/></clipPath>
<clipPath id="pk2"><path d="M1920 750C1870 775 1850 810 1833 847C1820 880 1800 915 1773 950C1750 975 1710 1000 1643 1035H1920Z"/></clipPath>
</defs>

<!-- main block -->
<path d="M1346 129L1821 404L1176 776L699 501Z" fill="#558f50"/>
<path d="M699 501L1176 776V928L699 654Z" fill="#3f6e3a"/>
<path d="M1176 776L1821 404V555L1176 928Z" fill="#487845"/>
${hole(1346,206,1)}${hole(1686,402,2)}${hole(836,500,3)}${hole(1175.500,696,4)}

<!-- pocket -->
<path d="${pocket}" fill="url(#pkBase)"/>
<g clip-path="url(#pk)">
  <path d="M1150 470C1190 420 1260 375 1350 345C1410 330 1480 355 1520 395" fill="none" stroke="#2f602b" stroke-width="24" filter="url(#b12)" opacity=".65"/>
  <ellipse cx="1300" cy="490" rx="200" ry="75" transform="rotate(-22 1300 490)" fill="#548e4f" filter="url(#b25)"/>
  <ellipse cx="1230" cy="545" rx="190" ry="50" transform="rotate(-15 1230 545)" fill="#558f50" filter="url(#b12)"/>
  <path d="M1300 400L1470 490" stroke="#629a5f" stroke-width="30" filter="url(#b12)" opacity=".7"/>
  <path d="M1080 345C1055 410 1042 460 1020 505" fill="none" stroke="#95ad90" stroke-width="26" filter="url(#b6)" opacity=".7"/>
  <path d="M1020 505C1000 535 975 555 945 575" fill="none" stroke="#86a483" stroke-width="22" filter="url(#b12)" opacity=".5"/>
  <ellipse cx="1095" cy="525" rx="32" ry="42" fill="#69996a" filter="url(#b12)" opacity=".7"/>
  <ellipse cx="1010" cy="590" rx="70" ry="18" transform="rotate(-30 1010 590)" fill="#70a06e" filter="url(#b12)" opacity=".7"/>
  <ellipse cx="950" cy="650" rx="70" ry="30" transform="rotate(-35 950 650)" fill="#4a8546" filter="url(#b12)"/>
  <path d="M880 665C925 630 985 600 1040 565C1075 540 1080 490 1115 460C1170 410 1280 375 1370 350" fill="none" stroke="#8fb28a" stroke-width="2.500" filter="url(#b1)" opacity=".22"/>
  <path d="M890 690C940 650 1000 620 1060 590" fill="none" stroke="#8fb28a" stroke-width="3" filter="url(#b1)" opacity=".2"/>
  <path d="M880 610C885 660 920 720 960 726L1000 690L960 640Z" fill="#3d6e38" filter="url(#b12)" opacity=".75"/>
  <ellipse cx="985" cy="716" rx="18" ry="6" transform="rotate(-35 985 716)" fill="#93a98e" filter="url(#b3)"/>
  <path d="M1358 371L1372 366L1364 370Z" fill="#fff" stroke="#fff" stroke-width=".6"/>
</g>

<!-- second block -->
<path d="M1465 942L1920 680V1035H1627Z" fill="#558f50"/>
<path d="M1465 942L1627 1035H1465Z" fill="#3f6e3a"/>
<path d="M1920 750C1870 775 1850 810 1833 847C1820 880 1800 915 1773 950C1750 975 1710 1000 1643 1035H1920Z" fill="#5b945a"/>
<g clip-path="url(#pk2)">
  <path d="M1865 785C1845 840 1825 885 1795 925C1770 955 1730 990 1690 1030" fill="none" stroke="#8fa58a" stroke-width="38" filter="url(#b6)"/>
  <ellipse cx="1915" cy="815" rx="28" ry="50" fill="#3c6a37" filter="url(#b12)"/>
  <ellipse cx="1905" cy="880" rx="35" ry="35" fill="#3f7039" filter="url(#b12)"/>
  <path d="M1920 860C1880 880 1860 920 1840 960C1830 975 1810 985 1800 990" fill="none" stroke="#a5bb94" stroke-width="2" filter="url(#b1)" opacity=".55"/>
  <ellipse cx="1860" cy="1000" rx="70" ry="35" fill="#659c63" filter="url(#b12)"/>
</g>
<ellipse cx="1601" cy="935" rx="35" ry="27" fill="#3f6e3a"/>
<ellipse cx="1601" cy="928" rx="35" ry="21" fill="#4c8549" stroke="#83a681" stroke-width=".8"/>
<ellipse cx="1601" cy="925" rx="29" ry="16" fill="#599556"/>
<path d="M1573 930C1585 945 1615 945 1632 932" fill="none" stroke="#6f9f6c" stroke-width="4" filter="url(#b1)"/>
<path d="M1595 942H1601" stroke="#fff"/>

<!-- contour rectangle -->
<path d="M699 654L1346 280L1821 555" fill="none" stroke="#2a489f" stroke-width="4.500" stroke-opacity=".92"/>
<path d="M699 654L1176 927L1821 555" fill="none" stroke="#0000ff" stroke-width="5"/>
<circle cx="1026" cy="464" r="3" fill="#6f84d8" stroke="#3a55a8"/><circle cx="1548" cy="397" r="3" fill="#6f84d8" stroke="#3a55a8"/>
<path d="M1361 278L1376 286" stroke="#bb2f18" stroke-width="8"/><path d="M1353 273L1367 272L1359 285ZM1387 292L1372 293L1380 279Z" fill="#bb2f18"/>

<!-- tab markers -->
<g fill="none" stroke="#5a5230" stroke-width="1">
<path d="M1526 703L1506 713V733L1518 745L1539 733V709ZM1506 713L1518 722L1539 709M1518 722V745" fill="#b8b8a0" fill-opacity=".28"/><path d="M1526 703V723L1506 733M1526 723L1539 733" stroke-opacity=".7"/>
<path d="M918 754L901 766V787L921 797L936 786V765ZM901 766L921 775L936 765M921 775V797" fill="#b8b8a0" fill-opacity=".28"/><path d="M918 754V775L901 787M918 775L936 786" stroke-opacity=".7"/>
</g>
<g stroke="#2030e0" stroke-width=".8"><path d="M1511 726L1520 738M1520 726L1511 738M925 778V790M918 783H932"/></g>
<circle cx="1515" cy="732" r="3.500" fill="#d8d8ff"/><circle cx="925" cy="783" r="3.500" fill="#d8d8ff"/>

<!-- origin triad -->
<path d="M1176 775V745" stroke="#15205c" stroke-width="2"/><path d="M1176 743L1172.500 752H1179.500Z" fill="#5566dd"/>
<path d="M1176 775L1152 761" stroke="#10dd10" stroke-width="2"/><path d="M1148 759L1158 760L1153 766Z" fill="#0f8a18"/>
<path d="M1176 775L1200 761" stroke="#cc1515" stroke-width="2"/><path d="M1204 759L1194 760L1199 766Z" fill="#661010"/>
<g font-size="11"><text x="1176" y="740" text-anchor="middle" fill="#2238c8">Z</text><text x="1141" y="759" text-anchor="middle" fill="#33b030">Y</text><text x="1210" y="759" text-anchor="middle" fill="#b54030">X</text></g>

<!-- view cube -->
<ellipse cx="1858" cy="172" rx="32" ry="8" fill="#999" filter="url(#b6)" opacity=".75"/>
<path d="M1856.700 98L1821.700 114.500L1825 152L1856.700 175L1889 152L1891.700 114.500Z" fill="url(#cubeL)"/>
<path d="M1856.700 98L1821.700 114.500L1856.700 133.500L1891.700 114.500Z" fill="#ececec"/>
<path d="M1856.700 98L1821.700 114.500L1825 152L1856.700 175L1889 152L1891.700 114.500ZM1821.700 114.500L1856.700 133.500L1891.700 114.500M1856.700 133.500V175" fill="none" stroke="#8c8c8c" stroke-width=".8"/>
<path d="M1856 98L1815 116" stroke="#77e06a" stroke-width="1.500"/><path d="M1857 98L1900 117" stroke="#f0a0a0" stroke-width="1.500"/>
<ellipse cx="1856.700" cy="134" rx="8" ry="7" fill="#dcdcde"/>
<g fill="#a6a8ac" font-size="10.500">
<text transform="matrix(-.9 -.36 .9 -.42 1857 112)" text-anchor="middle">TOP</text>
<text transform="matrix(.85 .5 0 1 1839 147)" text-anchor="middle">BACK</text>
<text transform="matrix(.85 -.5 0 1 1875 146)" text-anchor="middle">LEFT</text>
</g>
<g font-size="13"><text x="1807" y="124" text-anchor="middle" fill="#8fe98a">Y</text><text x="1905.500" y="124" text-anchor="middle" fill="#f29a9a">X</text></g>
</svg>`)}});
</script>
</body></html>
